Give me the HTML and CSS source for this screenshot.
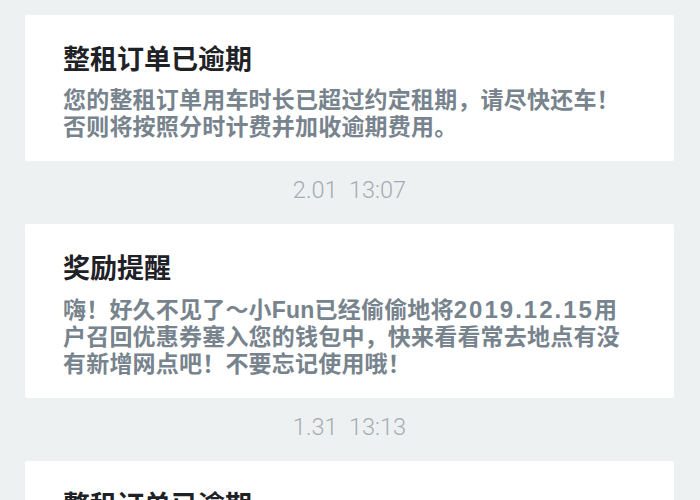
FILE: index.html
```html
<!DOCTYPE html>
<html lang="zh-CN">
<head>
<meta charset="utf-8">
<link rel="stylesheet" href="styles.css">
</head>
<body>
<div class="list">
  <div class="card">
    <div class="title">整租订单已逾期</div>
    <div class="body">您的整租订单用车时长已超过约定租期，请尽快还车！<br>否则将按照分时计费并加收逾期费用。</div>
  </div>
  <div class="time">2.01&nbsp;&nbsp;13:07</div>
  <div class="card">
    <div class="title">奖励提醒</div>
    <div class="body">嗨！好久不见了～小Fun已经偷偷地将<span class="num">2019.12.15</span>用<br>户召回优惠券塞入您的钱包中，快来看看常去地点有没<br>有新增网点吧！不要忘记使用哦！</div>
  </div>
  <div class="time">1.31&nbsp;&nbsp;13:13</div>
  <div class="card">
    <div class="title">整租订单已逾期</div>
    <div class="body">您的整租订单用车时长已超过约定租期，请尽快还车！<br>否则将按照分时计费并加收逾期费用。</div>
  </div>
</div>
</body>
</html>
```

FILE: styles.css
```css
html, body {
  margin: 0;
  padding: 0;
  background: #eef1f1;
  overflow: hidden;
}
.list {
  display: flex;
  flex-direction: column;
  padding: 15px 26px 0 25px;
}
.card {
  background: #ffffff;
  border-radius: 2px;
  padding: 26px 20px 20px 38px;
}
.title {
  font-family: "Noto Sans CJK SC", "Noto Sans", sans-serif;
  font-weight: 700;
  font-size: 27px;
  line-height: 34px;
  color: #1e2226;
}
.body {
  margin-top: 12px;
  font-family: "Liberation Sans", "Noto Sans CJK SC", sans-serif;
  font-weight: 700;
  font-size: 23px;
  line-height: 27px;
  letter-spacing: 0.2px;
  color: #77838d;
  white-space: nowrap;
}
.num {
  font-size: 24px;
  letter-spacing: 2px;
}
.time {
  text-align: center;
  font-family: Roboto, "Liberation Sans", sans-serif;
  font-weight: 300;
  font-size: 23.5px;
  line-height: 30px;
  color: #a3acb3;
  padding: 14px 0 19px 0;
}
```
